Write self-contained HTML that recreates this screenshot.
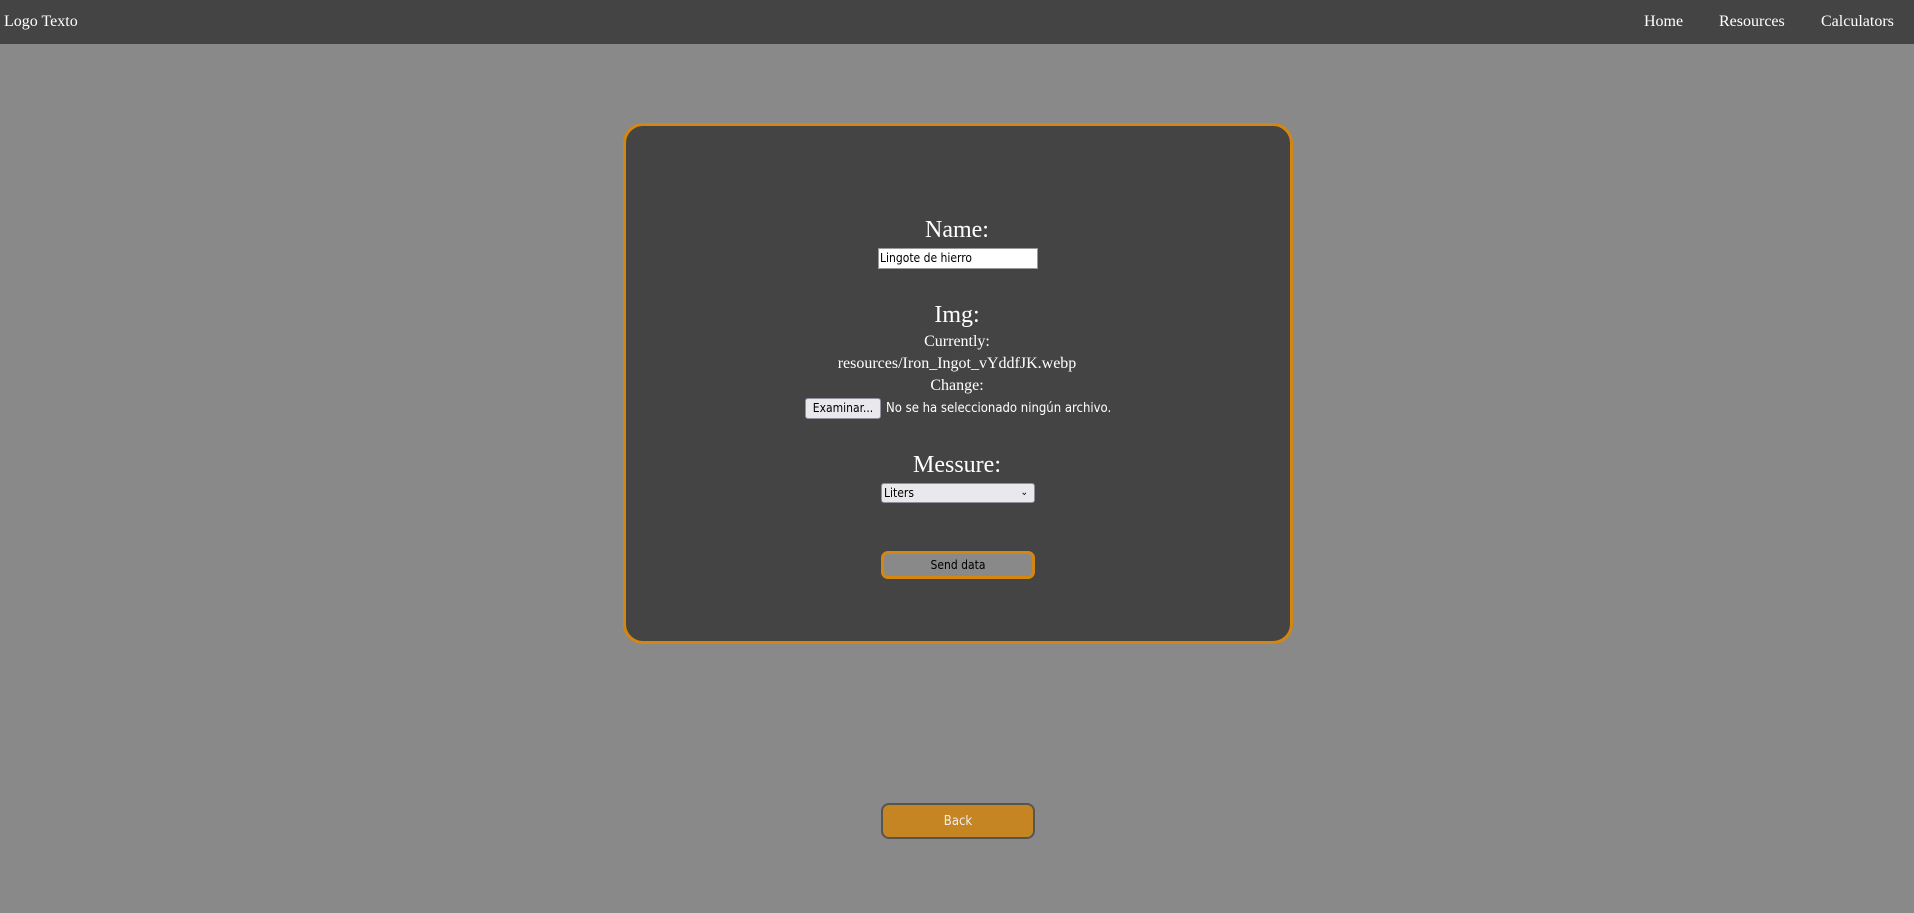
<!DOCTYPE html>
<html><head><meta charset="utf-8"><style>
*{box-sizing:border-box}
body{margin:0;background:#898989;width:1914px;height:913px;overflow:hidden;font-family:"Liberation Serif",serif;position:relative}
nav{position:absolute;left:0;top:0;width:1914px;height:44px;background:#444;color:#fff;font-size:16px}
nav span{position:absolute;top:13px}
.card{position:absolute;left:623px;top:123px;width:670px;height:521px;background:#444;border:3px solid #d4860f;border-radius:20px}
.t{position:absolute;left:0;width:1914px;text-align:center;color:#fff}
.h{font-size:24px}
.s{font-size:16px}
.box{position:absolute;font-family:"DejaVu Sans Condensed","Liberation Sans",sans-serif;font-size:12px;color:#000}
</style></head><body>
<nav><span style="left:4px">Logo Texto</span><span style="left:1644px">Home</span><span style="left:1719px">Resources</span><span style="left:1821px">Calculators</span></nav>
<div class="card"></div>
<div class="t h" style="top:217px">Name:</div>
<div class="box" style="left:878px;top:248px;width:160px;height:21px;background:#fff;border:1px solid #999;padding:2px 1px;line-height:15px">Lingote de hierro</div>
<div class="t h" style="top:302px">Img:</div>
<div class="t s" style="top:333px">Currently:</div>
<div class="t s" style="top:355px">resources/Iron_Ingot_vYddfJK.webp</div>
<div class="t s" style="top:377px">Change:</div>
<div class="box" style="left:805px;top:398px;width:76px;height:21px;background:#e9e9ed;border:1px solid #8f8f9d;border-radius:3px;text-align:center;line-height:19px">Examinar...</div>
<div class="box" style="left:886px;top:401px;color:#fff;line-height:16px;font-size:13px">No se ha seleccionado ningún archivo.</div>
<div class="t h" style="top:452px">Messure:</div>
<div class="box" style="left:881px;top:483px;width:154px;height:20px;background:#e9e9ed;border:1px solid #8f8f9d;border-radius:3px;padding-left:2px;line-height:18px">Liters<span style="position:absolute;right:6px;top:0;font-size:10px">&#8964;</span></div>
<div class="box" style="left:881px;top:551px;width:154px;height:28px;background:#898989;border:3px solid #d4860f;border-radius:7px;text-align:center;line-height:22px">Send data</div>
<div class="box" style="left:881px;top:803px;width:154px;height:36px;background:#c58523;border:2px solid #555;border-radius:8px;text-align:center;line-height:33px;color:#eee;font-size:13px">Back</div>
</body></html>
